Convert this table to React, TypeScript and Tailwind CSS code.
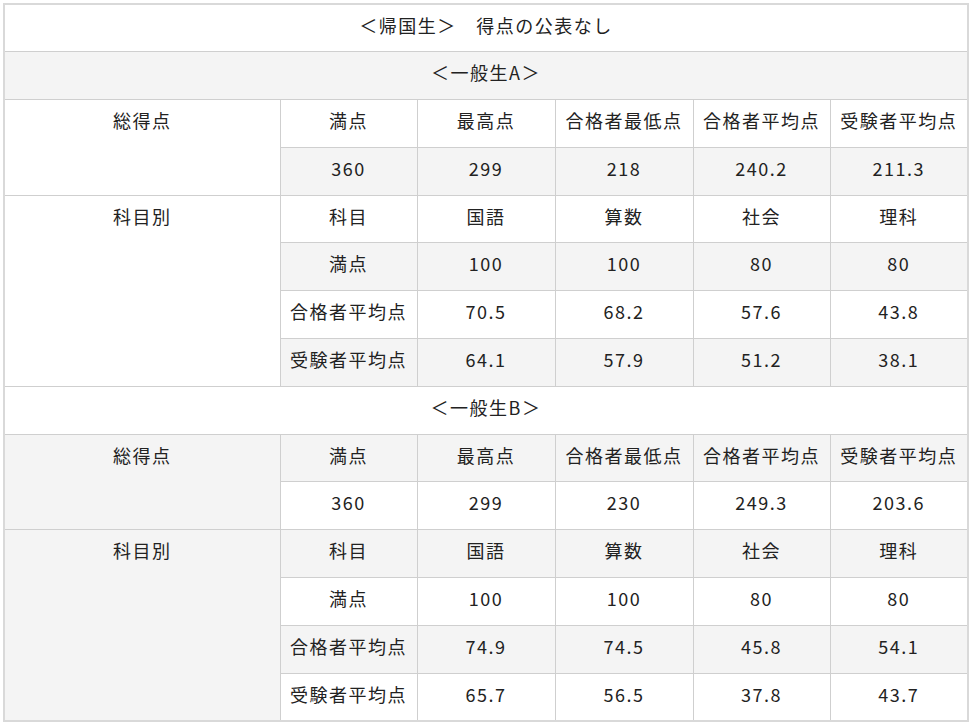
const fontStack = { fontFamily: '"Noto Sans CJK JP", "Noto Sans", sans-serif' }

type Group = {
  label: string
  total: string[]
  subjects: { label: string; values: string[] }[]
}

const groups: Group[] = [
  {
    label: '＜一般生A＞',
    total: ['360', '299', '218', '240.2', '211.3'],
    subjects: [
      { label: '満点', values: ['100', '100', '80', '80'] },
      { label: '合格者平均点', values: ['70.5', '68.2', '57.6', '43.8'] },
      { label: '受験者平均点', values: ['64.1', '57.9', '51.2', '38.1'] },
    ],
  },
  {
    label: '＜一般生B＞',
    total: ['360', '299', '230', '249.3', '203.6'],
    subjects: [
      { label: '満点', values: ['100', '100', '80', '80'] },
      { label: '合格者平均点', values: ['74.9', '74.5', '45.8', '54.1'] },
      { label: '受験者平均点', values: ['65.7', '56.5', '37.8', '43.7'] },
    ],
  },
]

const totalHeads = ['満点', '最高点', '合格者最低点', '合格者平均点', '受験者平均点']
const subjectHeads = ['科目', '国語', '算数', '社会', '理科']

const cell =
  'h-[47.8px] border border-[#cfcfcf] px-1 pt-[8px] align-top text-center text-[18px] leading-6 tracking-[1.5px] text-[#222] whitespace-nowrap'

export default function App() {
  const rows: React.ReactNode[] = []

  rows.push(
    <tr key="kikoku">
      <td colSpan={6} className={cell}>
        {'＜帰国生＞　得点の公表なし'}
      </td>
    </tr>
  )

  groups.forEach((g, gi) => {
    rows.push(
      <tr key={`h${gi}`}>
        <td colSpan={6} className={cell}>
          {g.label}
        </td>
      </tr>
    )
    rows.push(
      <tr key={`t${gi}`}>
        <td rowSpan={2} className={cell}>
          総得点
        </td>
        {totalHeads.map((h) => (
          <td key={h} className={cell}>
            {h}
          </td>
        ))}
      </tr>
    )
    rows.push(
      <tr key={`tv${gi}`}>
        {g.total.map((v, i) => (
          <td key={i} className={cell}>
            {v}
          </td>
        ))}
      </tr>
    )
    rows.push(
      <tr key={`s${gi}`}>
        <td rowSpan={4} className={cell}>
          科目別
        </td>
        {subjectHeads.map((h) => (
          <td key={h} className={cell}>
            {h}
          </td>
        ))}
      </tr>
    )
    g.subjects.forEach((s, si) => {
      rows.push(
        <tr key={`s${gi}-${si}`}>
          <td className={cell}>{s.label}</td>
          {s.values.map((v, i) => (
            <td key={i} className={cell}>
              {v}
            </td>
          ))}
        </tr>
      )
    })
  })

  return (
    <div className="min-h-screen bg-white p-[3px]" style={fontStack}>
      <table className="w-[964px] table-fixed border-collapse border-2 border-[#d9d9d9] [&_tr:nth-child(even)]:bg-[#f4f4f4]">
        <colgroup>
          <col className="w-[276px]" />
          <col className="w-[137px]" />
          <col className="w-[138px]" />
          <col className="w-[138px]" />
          <col className="w-[137px]" />
          <col className="w-[138px]" />
        </colgroup>
        <tbody>{rows}</tbody>
      </table>
    </div>
  )
}
